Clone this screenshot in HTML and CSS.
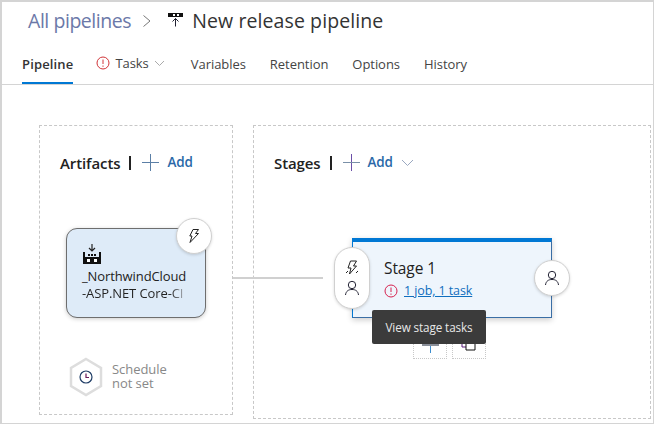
FILE: index.html
```html
<!DOCTYPE html>
<html lang="en">
<head>
<meta charset="utf-8">
<title>New release pipeline</title>
<link rel="stylesheet" href="styles.css">
</head>
<body>
<div class="frame">
  <header class="titlebar">
    <span class="crumb">All pipelines</span>
    <svg class="crumb-sep" width="10" height="14" viewBox="0 0 10 14"><path d="M1.500 1.500 8 7l-6.500 5.500" fill="none" stroke="#777" stroke-width="1"/></svg>
    <svg class="pipe-icon" width="16" height="16" viewBox="0 0 16 16"><path d="M1 1h15v4H1z" fill="#111"/><path d="M6 2h2v2H6zM10 2h2v2h-2z" fill="#fff"/><path d="M8.500 6.500v8M5.500 9.500l3-3 3 3" fill="none" stroke="#223" stroke-width="1"/></svg>
    <span class="title">New release pipeline</span>
  </header>
  <nav class="tabs">
    <span class="tab active">Pipeline</span>
    <span class="tab tasks">
      <svg width="14" height="14" viewBox="0 0 14 14"><circle cx="7" cy="7" r="6" fill="none" stroke="#d13438"/><path d="M7 3.500v4.500M7 9.500v1.300" stroke="#d13438" fill="none"/></svg>
      Tasks
      <svg width="11" height="7" viewBox="0 0 11 7"><path d="M1 1l4.500 4.500L10 1" fill="none" stroke="#aaa"/></svg>
    </span>
    <span class="tab">Variables</span>
    <span class="tab">Retention</span>
    <span class="tab">Options</span>
    <span class="tab">History</span>
  </nav>
  <main class="canvas">
    <section class="panel artifacts">
      <div class="panel-head">
        <h2>Artifacts</h2>
        <span class="divider"></span>
        <svg class="plus" width="17" height="17" viewBox="0 0 17 17"><path d="M8.500 0v17M0 8.500h17" stroke="#5b7fa6" fill="none"/></svg>
        <span class="add">Add</span>
      </div>
      <div class="artifact-card">
        <svg class="factory" width="18" height="21" viewBox="0 0 18 21"><path d="M9 0v6.500M6 4l3 3 3-3" fill="none" stroke="#222" stroke-width="1.200"/><path d="M0 8h2v6H0zM16 8h2v6h-2zM5 10h2v2H5zM8 10h2v2H8zM11 10h2v2h-2zM0 13h18v7H0z" fill="#111"/><path d="M4 15h3v3H4zM11 15h3v3h-3z" fill="#fff"/></svg>
        <div class="artifact-name">_NorthwindCloud</div>
        <div class="artifact-name fade">-ASP.NET Core-CI</div>
      </div>
      <span class="badge trigger">
        <svg width="16" height="16" viewBox="0 0 16 16"><path d="M7 1.500h5.500l-3 4h3L4 14.500l2-6.500H3.800z" fill="none" stroke="#222"/></svg>
      </span>
      <div class="schedule">
        <svg class="hex" width="36" height="40" viewBox="0 0 36 40"><path d="M18 2 33 11v18L18 38 3 29V11z" fill="#fff" stroke="#ddd" stroke-width="2.500"/><circle cx="18" cy="20" r="6" fill="none" stroke="#1f3d66" stroke-width="1.200"/><path d="M18 16.500V20.500h3" fill="none" stroke="#6a1b5a" stroke-width="1.200"/></svg>
        <div class="schedule-text">
          <div class="schedule-line">Schedule</div>
          <div class="schedule-line">not set</div>
        </div>
      </div>
    </section>
    <section class="panel stages">
      <div class="panel-head">
        <h2>Stages</h2>
        <span class="divider"></span>
        <svg class="plus" width="17" height="17" viewBox="0 0 17 17"><path d="M8.500 0v17" stroke="#6b4fa8" fill="none"/><path d="M0 8.500h17" stroke="#7a90a8" fill="none"/></svg>
        <span class="add">Add</span>
        <svg class="add-caret" width="13" height="8" viewBox="0 0 13 8"><path d="M1 1l5.500 5.500L12 1" fill="none" stroke="#9aa8c0"/></svg>
      </div>
      <div class="connector"></div>
      <div class="stage-card">
        <div class="stage-name">Stage 1</div>
        <div class="stage-tasks">
          <svg width="14" height="14" viewBox="0 0 14 14"><circle cx="7" cy="7" r="6" fill="none" stroke="#d6224f"/><path d="M7 3.500v4.500M7 9.500v1.300" stroke="#d6224f" fill="none"/></svg>
          <a class="stage-link">1 job, 1 task</a>
        </div>
      </div>
      <div class="pill">
        <svg width="16" height="16" viewBox="0 0 16 16"><path d="M6.500 1h6l-3 5h3l-7 8 1.500-6H4zM2 13l2-2M12 13l2-2" fill="none" stroke="#222"/></svg>
        <svg width="16" height="16" viewBox="0 0 16 16"><circle cx="8" cy="5" r="3.700" fill="none" stroke="#223"/><path d="M1.500 15c.5-4 3-5.500 6.500-5.500s6 1.500 6.500 5.500" fill="none" stroke="#223"/></svg>
      </div>
      <span class="badge approver">
        <svg width="16" height="16" viewBox="0 0 16 16"><circle cx="8" cy="5" r="3.700" fill="none" stroke="#223"/><path d="M1.500 15c.5-4 3-5.500 6.500-5.500s6 1.500 6.500 5.500" fill="none" stroke="#223"/></svg>
      </span>
      <div class="stage-actions">
        <span class="action"><svg width="17" height="24" viewBox="0 0 17 24"><path d="M8.500 0v24" stroke="#3d8ecf" fill="none"/><path d="M0 16h17" stroke="#8a8f99" stroke-width="2" fill="none"/></svg></span>
        <span class="action"><svg width="16" height="18" viewBox="0 0 16 18"><path d="M1 1h8v11H1z" fill="none" stroke="#5a1a7a"/><path d="M5 5h9v10H5z" fill="#fff" stroke="#111"/></svg></span>
      </div>
      <div class="tooltip">View stage tasks</div>
    </section>
  </main>
</div>
</body>
</html>
```
FILE: styles.css
```css
* { box-sizing: border-box; }
html, body { margin: 0; height: 100%; background: #fff; }
body { font-family: "Open Sans", "Noto Sans", sans-serif; color: #222; overflow: hidden; }
.frame {
  width: 654px; height: 424px;
  border: 1px solid #d4d4d4;
  border-top-width: 2px;
  border-left-width: 2px;
  display: flex; flex-direction: column;
}
.titlebar { display: flex; align-items: center; height: 37px; padding-left: 26px; }
.crumb { font-size: 19.500px; letter-spacing: -0.450px; color: #6b78a8; }
.crumb-sep { margin-left: 11px; }
.pipe-icon { margin-left: 15px; margin-bottom: 2px; }
.title { font-size: 19.500px; letter-spacing: 0.100px; color: #333; margin-left: 9px; }
.tabs {
  display: flex; align-items: flex-start; height: 46px; padding-left: 20px;
  padding-top: 16px;
  border-bottom: 1px solid #d4d4d4;
  gap: 24px;
}
.tab { font-size: 13px; letter-spacing: -0.050px; color: #444; line-height: 18px; height: 29px; }
.tab.active { font-weight: 600; letter-spacing: 0.150px; color: #333; border-bottom: 2px solid #0078d4; }
.tab.tasks { display: flex; align-items: flex-start; gap: 5px; height: 18px; margin: -1px 2px 0 -1px; }
.tab.tasks svg:first-child { margin-top: 2px; }
.tab.tasks svg:last-child { margin-top: 6px; }
.canvas { flex: 1; display: flex; align-items: flex-start; gap: 20px; padding: 40px 2px 0 37px; }
.panel { position: relative; border: 1px dashed #c8c8c8; }
.artifacts { width: 194px; height: 290px; }
.stages { flex: 1; height: 294px; }
.panel-head { display: flex; align-items: center; height: 22px; margin: 26px 0 0 20px; }
.panel-head h2 { margin: 0; font-size: 15px; font-weight: 600; letter-spacing: -0.100px; color: #222; }
.divider { width: 2px; height: 14px; background: #222; margin: 0 11px 0 9px; }
.add { font-size: 13.500px; font-weight: 600; letter-spacing: -0.150px; color: #2a68a8; margin-left: 8px; margin-top: -2px; }
.plus { margin-top: -2px; }
.add-caret { margin-left: 8px; }
.artifact-card {
  position: absolute; left: 26px; top: 102px; width: 140px; height: 90px;
  background: #deebf8; border: 1px solid #6e6e6e; border-radius: 11px;
  box-shadow: 0 1px 4px rgba(0,0,0,.2);
  padding: 15px 0 0 16px;
  overflow: hidden;
}
.factory { display: block; margin-bottom: 3px; }
.artifact-name { font-size: 13px; letter-spacing: -0.100px; line-height: 16.500px; white-space: nowrap; color: #222; margin-left: -1px; }
.artifact-name.fade { background: linear-gradient(90deg, #222 72%, #cfd8e2 86%); -webkit-background-clip: text; background-clip: text; color: transparent; }
.badge {
  position: absolute; width: 36px; height: 36px; border-radius: 50%;
  background: #fff; border: 1px solid #d0d0d0;
  box-shadow: 0 1px 3px rgba(0,0,0,.15);
  display: flex; align-items: center; justify-content: center;
}
.trigger { left: 136px; top: 92px; }
.schedule { position: absolute; left: 28px; top: 231px; display: flex; align-items: center; gap: 8px; }
.schedule-text { margin-top: -2px; }
.schedule-line { font-size: 13px; line-height: 14.500px; letter-spacing: -0.050px; color: #888; }
.connector { position: absolute; left: -21px; top: 151px; width: 90px; height: 2px; background: #d0d0d0; }
.stage-card {
  position: absolute; left: 98px; top: 112px; width: 200px; height: 80px;
  background: #eef5fc;
  border: 1px solid #3a6ea5; border-top: 4px solid #0078d4; border-left: 1px solid #0078d4;
  box-shadow: 0 2px 6px rgba(0,0,0,.2);
  padding: 16px 0 0 31px;
}
.stage-name { font-size: 15.500px; letter-spacing: -0.100px; line-height: 20px; color: #222; }
.stage-tasks { display: flex; align-items: center; gap: 6px; margin-top: 4px; }
.stage-link { font-size: 12.500px; letter-spacing: -0.100px; color: #106ebe; text-decoration: underline; }
.pill {
  position: absolute; left: 80px; top: 121px; width: 36px; height: 62px;
  background: #fff; border: 1px solid #d0d0d0; border-radius: 18px;
  box-shadow: 0 1px 3px rgba(0,0,0,.15);
  display: flex; flex-direction: column; align-items: center; justify-content: center; gap: 4px;
}
.approver { left: 280px; top: 134px; }
.stage-actions { position: absolute; left: 159px; top: 200px; display: flex; gap: 5px; }
.action {
  width: 34px; height: 33px; border: 1px dotted #c8c8c8;
  display: flex; align-items: flex-end; justify-content: center; padding-bottom: 5px;
}
.tooltip {
  position: absolute; left: 118px; top: 184px; width: 114px; height: 34px;
  background: #3b3b3b; color: #e8e8e8; border-radius: 2px;
  font-size: 11.700px; letter-spacing: -0.100px;
  display: flex; align-items: center; justify-content: center;
}
```
